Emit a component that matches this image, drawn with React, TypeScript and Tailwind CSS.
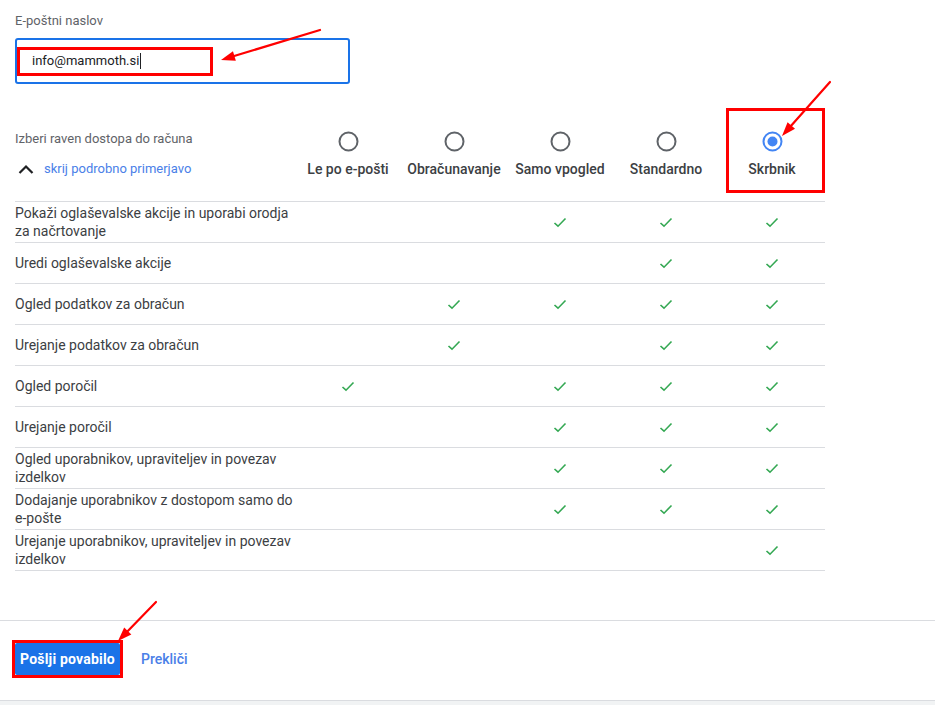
import React from 'react';

const roles = ['Le po e-pošti', 'Obračunavanje', 'Samo vpogled', 'Standardno', 'Skrbnik'];

const rows: { label: string[]; checks: number[] }[] = [
  { label: ['Pokaži oglaševalske akcije in uporabi orodja', 'za načrtovanje'], checks: [0, 0, 1, 1, 1] },
  { label: ['Uredi oglaševalske akcije'], checks: [0, 0, 0, 1, 1] },
  { label: ['Ogled podatkov za obračun'], checks: [0, 1, 1, 1, 1] },
  { label: ['Urejanje podatkov za obračun'], checks: [0, 1, 0, 1, 1] },
  { label: ['Ogled poročil'], checks: [1, 0, 1, 1, 1] },
  { label: ['Urejanje poročil'], checks: [0, 0, 1, 1, 1] },
  { label: ['Ogled uporabnikov, upraviteljev in povezav', 'izdelkov'], checks: [0, 0, 1, 1, 1] },
  { label: ['Dodajanje uporabnikov z dostopom samo do', 'e-pošte'], checks: [0, 0, 1, 1, 1] },
  { label: ['Urejanje uporabnikov, upraviteljev in povezav', 'izdelkov'], checks: [0, 0, 0, 0, 1] },
];

function Check() {
  return (
    <svg width="14" height="11" viewBox="0 0 14 11">
      <path d="M1.5 6 L5 9.2 L12.5 1.5" fill="none" stroke="#34a853" strokeWidth="1.6" />
    </svg>
  );
}

function Radio({ checked }: { checked: boolean }) {
  return (
    <svg width="21" height="21" viewBox="0 0 21 21">
      <circle cx="10.5" cy="10.5" r="9" fill="none" stroke={checked ? '#4285f4' : '#5f6368'} strokeWidth="2" />
      {checked && <circle cx="10.5" cy="10.5" r="5" fill="#4285f4" />}
    </svg>
  );
}

// annotation arrow: line with a filled head at (x2, y2)
function Arrow({ x1, y1, x2, y2 }: { x1: number; y1: number; x2: number; y2: number }) {
  const dx = x2 - x1;
  const dy = y2 - y1;
  const len = Math.hypot(dx, dy);
  const ux = dx / len;
  const uy = dy / len;
  const hl = 14;
  const hw = 5;
  const bx = x2 - ux * hl;
  const by = y2 - uy * hl;
  const pts = `${x2},${y2} ${bx - uy * hw},${by + ux * hw} ${bx + uy * hw},${by - ux * hw}`;
  return (
    <g>
      <line x1={x1} y1={y1} x2={bx + ux * 2} y2={by + uy * 2} stroke="#ff0000" strokeWidth="2.2" strokeLinecap="round" />
      <polygon points={pts} fill="#ff0000" />
    </g>
  );
}

export default function App() {
  return (
    <div className="relative w-[935px] h-[705px] overflow-hidden bg-white font-['Roboto','Liberation_Sans',sans-serif]">
      <div className="px-[15px] pt-[13px]">
        <div className="text-[13px] leading-[16px] text-[#5f6368]">E-poštni naslov</div>
        <div className="relative mt-[9px] w-[335px] h-[46px] border-2 border-[#1a73e8] rounded-[3px] flex items-center pl-[15px]">
          <span className="text-[13px] text-[#202124] leading-[18px]">info@mammoth.si</span>
          <span className="w-px h-[16px] bg-[#202124] ml-[1px]" />
          <div className="absolute left-0 top-[7px] w-[196px] h-[29px] border-[3px] border-[#ff0000]" />
        </div>

        <div className="mt-[47px] w-[810px]">
          <div className="grid grid-cols-[280px_repeat(5,106px)] border-b border-[#dadce0] pb-[23px]">
            <div className="flex flex-col">
              <div className="text-[13px] leading-[16px] text-[#5f6368]">Izberi raven dostopa do računa</div>
              <div className="mt-[13px] flex items-center h-[18px]">
                <svg width="16" height="10" viewBox="0 0 16 10" className="ml-[3px]">
                  <path d="M1.5 9 L8 2.5 L14.5 9" fill="none" stroke="#202124" strokeWidth="2.2" />
                </svg>
                <span className="ml-[10px] text-[13px] text-[#4a80e8] leading-[18px]">skrij podrobno primerjavo</span>
              </div>
            </div>
            {roles.map((r, i) => (
              <div key={r} className="flex flex-col items-center">
                <Radio checked={i === 4} />
                <div className="mt-[8px] text-[14px] leading-[18px] font-medium text-[#3c4043] whitespace-nowrap">{r}</div>
              </div>
            ))}
          </div>

          {rows.map((row, ri) => (
            <div key={ri} className="grid grid-cols-[280px_repeat(5,106px)] h-[41px] border-b border-[#dadce0] items-center">
              <div className="text-[14px] leading-[18px] text-[#3c4043]">
                {row.label.map((l, li) => (
                  <div key={li}>{l}</div>
                ))}
              </div>
              {row.checks.map((c, ci) => (
                <div key={ci} className="flex justify-center">
                  {c ? <Check /> : null}
                </div>
              ))}
            </div>
          ))}
        </div>
      </div>

      <div className="mt-[49px] border-t border-[#dadce0] h-[81px] border-b flex items-center pl-[12px]">
        <div className="border-[3px] border-[#ff0000] mb-[3px]">
          <button className="h-[32px] w-[105px] bg-[#1a73e8] text-white text-[14px] font-bold leading-[18px] tracking-[0.2px] rounded-[2px]">
            Pošlji povabilo
          </button>
        </div>
        <span className="ml-[18px] mb-[3px] text-[14px] font-medium text-[#4a80e8]">Prekliči</span>
      </div>
      <div className="h-[10px] bg-[#f1f3f4]" />

      <div className="absolute left-[726px] top-[108px] w-[99px] h-[85px] border-[3px] border-[#ff0000]" />

      <svg className="absolute left-0 top-0 pointer-events-none" width="935" height="705">
        <Arrow x1={320} y1={30} x2={221} y2={60} />
        <Arrow x1={830} y1={82} x2={782} y2={136} />
        <Arrow x1={156} y1={602} x2={118} y2={641} />
      </svg>
    </div>
  );
}
